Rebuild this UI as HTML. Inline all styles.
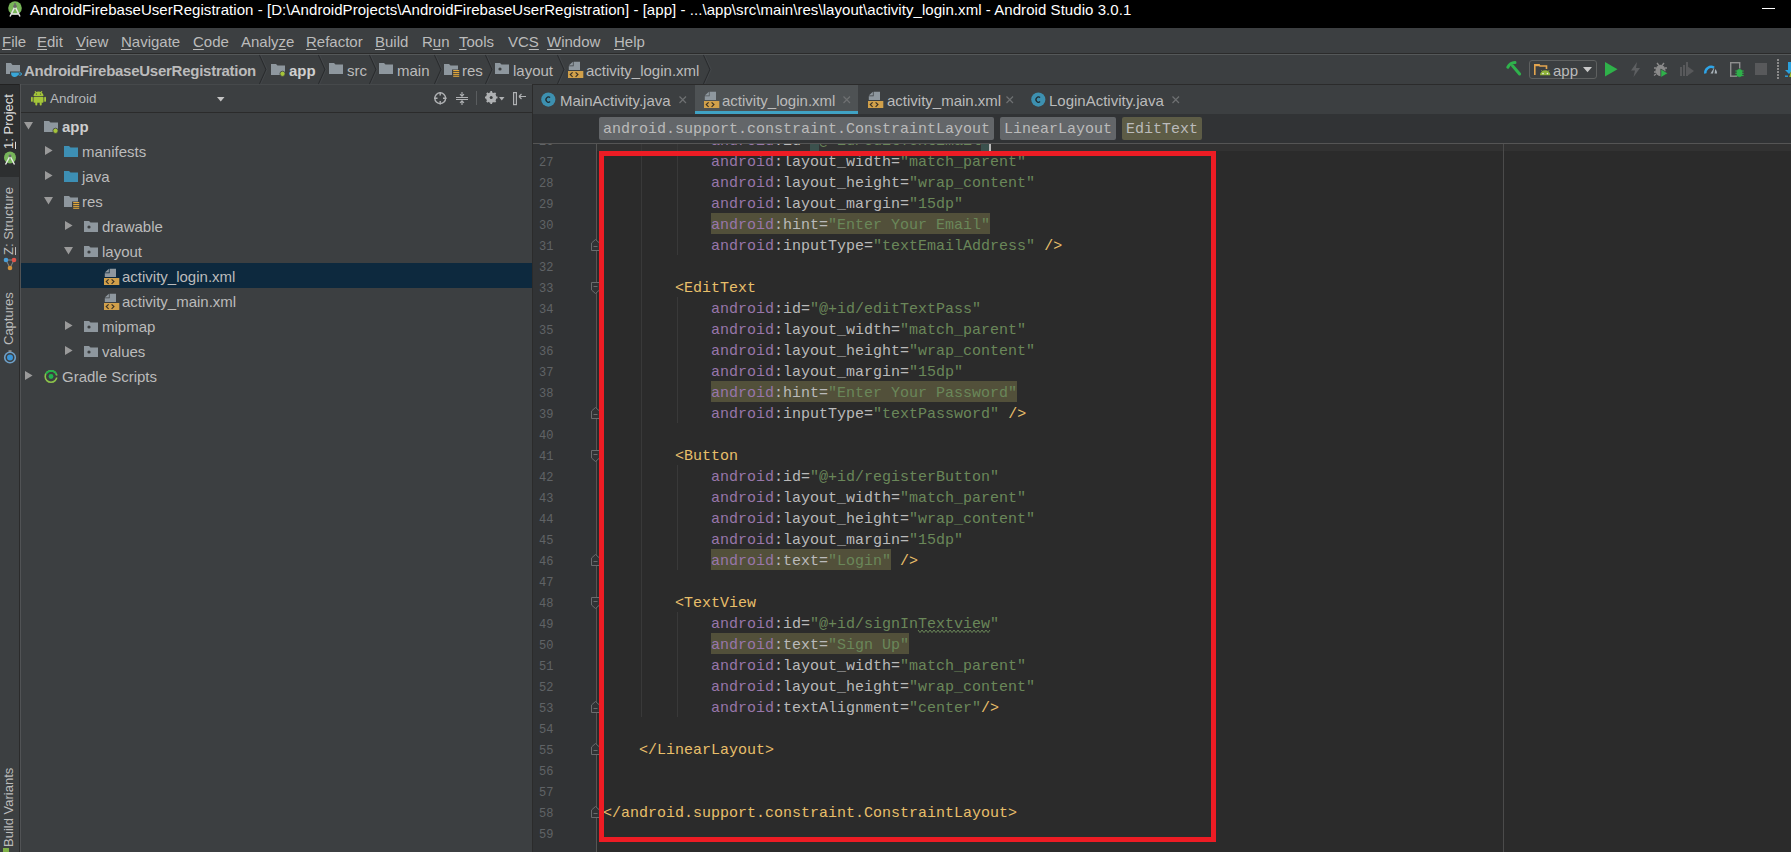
<!DOCTYPE html><html><head><meta charset="utf-8"><style>
*{margin:0;padding:0;box-sizing:border-box}
html,body{width:1791px;height:852px;overflow:hidden;background:#3c3f41;font-family:"Liberation Sans",sans-serif;font-size:15px;color:#bbbbbb;position:relative}
.a{position:absolute}
.t{position:absolute;white-space:pre;line-height:18px}
.vt{position:absolute;transform-origin:0 0;transform:rotate(-90deg);white-space:pre;font-size:13px;line-height:14px;color:#bbbbbb}
.cl{position:absolute;left:603px;height:21px;font-family:"Liberation Mono",monospace;font-size:15px;line-height:21px;white-space:pre;color:#bababa}
.ln{position:absolute;left:539px;height:21px;font-family:"Liberation Mono",monospace;font-size:12px;line-height:21px;white-space:pre;color:#606366}
.tg{color:#e8bf6a}.ns{color:#9876aa}.v{color:#6a8759}
.hl{background:#52503a;display:inline-block;height:21px;vertical-align:top}
u{text-decoration:underline;text-underline-offset:2px;text-decoration-thickness:1px}
svg{position:absolute;overflow:visible}
.pill{position:absolute;top:117px;height:23px;overflow:hidden;border-radius:2px;font-family:"Liberation Mono",monospace;font-size:15px;line-height:26px;padding:0 4px;white-space:pre;color:#bbbbbb}
</style></head><body>
<div class="a" style="left:0px;top:0px;width:1791px;height:28px;background:#000;"></div>
<div class="t" style="left:30px;top:1px;color:#fff;letter-spacing:0.055px">AndroidFirebaseUserRegistration - [D:\AndroidProjects\AndroidFirebaseUserRegistration] - [app] - ...\app\src\main\res\layout\activity_login.xml - Android Studio 3.0.1</div>
<div class="a" style="left:1762px;top:8px;width:13px;height:1px;background:#fff;"></div>
<svg style="left:8px;top:1px" width="15" height="16" viewBox="0 0 15 16"><circle cx="7" cy="7" r="6.8" fill="#78b658"/><path d="M2 15.5 L7 5.5 L12 15.5 M3 13 H11" stroke="#e6e6e6" stroke-width="1.5" fill="none"/><circle cx="7" cy="5.2" r="1.8" fill="#6a6a6a"/><rect x="6.3" y="2" width="1.4" height="2" fill="#6a6a6a"/></svg>
<div class="a" style="left:0px;top:28px;width:1791px;height:25px;background:#3c3f41;"></div>
<div class="t" style="left:2px;top:33px;"><u>F</u>ile</div>
<div class="t" style="left:37px;top:33px;"><u>E</u>dit</div>
<div class="t" style="left:76px;top:33px;"><u>V</u>iew</div>
<div class="t" style="left:121px;top:33px;"><u>N</u>avigate</div>
<div class="t" style="left:193px;top:33px;"><u>C</u>ode</div>
<div class="t" style="left:241px;top:33px;">Analy<u>z</u>e</div>
<div class="t" style="left:306px;top:33px;"><u>R</u>efactor</div>
<div class="t" style="left:375px;top:33px;"><u>B</u>uild</div>
<div class="t" style="left:422px;top:33px;">R<u>u</u>n</div>
<div class="t" style="left:459px;top:33px;"><u>T</u>ools</div>
<div class="t" style="left:508px;top:33px;">VC<u>S</u></div>
<div class="t" style="left:547px;top:33px;"><u>W</u>indow</div>
<div class="t" style="left:614px;top:33px;"><u>H</u>elp</div>
<div class="a" style="left:0px;top:53px;width:1791px;height:1px;background:#2b2b2b;"></div>
<div class="a" style="left:0px;top:54px;width:1791px;height:1px;background:#555859;"></div>
<div class="a" style="left:0px;top:55px;width:1791px;height:29px;background:#3c3f41;"></div>
<div class="a" style="left:21px;top:84px;width:511px;height:1px;background:#46494b;"></div>
<svg style="left:6px;top:63px" width="16" height="15" viewBox="0 0 16 15"><path d="M0 0 H5 L6.5 2 H14 V11 H0 Z" fill="#8e979e"/><path d="M4 8.5 H16 V14 H4 Z" fill="#3c3f41"/><path d="M5 9.5 H12.5 Q12.5 13.5 9 14 H8 Q5 13.5 5 9.5 Z" fill="#3aa7d8"/><ellipse cx="13.8" cy="11" rx="1.8" ry="1.2" fill="none" stroke="#3aa7d8" stroke-width="1"/></svg>
<div class="t" style="left:24px;top:62px;font-weight:bold;letter-spacing:-0.26px">AndroidFirebaseUserRegistration</div>
<svg style="left:259px;top:55px" width="9" height="29" viewBox="0 0 9 29"><path d="M0.5 0 L7 14.5 L0.5 29" fill="none" stroke="#2a2c2e" stroke-width="1.1"/><path d="M1.6 0 L8.1 14.5 L1.6 29" fill="none" stroke="#4a4d50" stroke-width="0.6"/></svg>
<svg style="left:271px;top:64px" width="16" height="14" viewBox="0 0 16 14"><path d="M0 0 H5 L6.5 1.5 H14 V11 H0 Z" fill="#8e979e"/><circle cx="11.5" cy="9.8" r="2.6" fill="#a5c43a" stroke="#3c3f41" stroke-width="0.8"/></svg>
<div class="t" style="left:289px;top:62px;font-weight:bold;color:#cfcfcf">app</div>
<svg style="left:318px;top:55px" width="9" height="29" viewBox="0 0 9 29"><path d="M0.5 0 L7 14.5 L0.5 29" fill="none" stroke="#2a2c2e" stroke-width="1.1"/><path d="M1.6 0 L8.1 14.5 L1.6 29" fill="none" stroke="#4a4d50" stroke-width="0.6"/></svg>
<svg style="left:329px;top:63px" width="16" height="14" viewBox="0 0 16 14"><path d="M0 0 H5 L6.5 1.5 H14 V11 H0 Z" fill="#8e979e"/></svg>
<div class="t" style="left:347px;top:62px;">src</div>
<svg style="left:369px;top:55px" width="9" height="29" viewBox="0 0 9 29"><path d="M0.5 0 L7 14.5 L0.5 29" fill="none" stroke="#2a2c2e" stroke-width="1.1"/><path d="M1.6 0 L8.1 14.5 L1.6 29" fill="none" stroke="#4a4d50" stroke-width="0.6"/></svg>
<svg style="left:379px;top:63px" width="16" height="14" viewBox="0 0 16 14"><path d="M0 0 H5 L6.5 1.5 H14 V11 H0 Z" fill="#8e979e"/></svg>
<div class="t" style="left:397px;top:62px;">main</div>
<svg style="left:434px;top:55px" width="9" height="29" viewBox="0 0 9 29"><path d="M0.5 0 L7 14.5 L0.5 29" fill="none" stroke="#2a2c2e" stroke-width="1.1"/><path d="M1.6 0 L8.1 14.5 L1.6 29" fill="none" stroke="#4a4d50" stroke-width="0.6"/></svg>
<svg style="left:444px;top:64px" width="16" height="14" viewBox="0 0 16 14"><path d="M0 0 H5 L6.5 1.5 H14 V11 H0 Z" fill="#8e979e"/><rect x="8" y="5.5" width="7" height="7" fill="#3c3f41"/><rect x="9.2" y="6.0" width="6" height="1.1" fill="#e2a73a"/><rect x="9.2" y="7.9" width="6" height="1.1" fill="#e2a73a"/><rect x="9.2" y="9.8" width="6" height="1.1" fill="#e2a73a"/><rect x="9.2" y="11.7" width="6" height="1.1" fill="#e2a73a"/></svg>
<div class="t" style="left:462px;top:62px;">res</div>
<svg style="left:485px;top:55px" width="9" height="29" viewBox="0 0 9 29"><path d="M0.5 0 L7 14.5 L0.5 29" fill="none" stroke="#2a2c2e" stroke-width="1.1"/><path d="M1.6 0 L8.1 14.5 L1.6 29" fill="none" stroke="#4a4d50" stroke-width="0.6"/></svg>
<svg style="left:495px;top:63px" width="16" height="14" viewBox="0 0 16 14"><path d="M0 0 H5 L6.5 1.5 H14 V11 H0 Z" fill="#8e979e"/><circle cx="5" cy="6" r="1.6" fill="#3c3f41"/></svg>
<div class="t" style="left:513px;top:62px;">layout</div>
<svg style="left:557px;top:55px" width="9" height="29" viewBox="0 0 9 29"><path d="M0.5 0 L7 14.5 L0.5 29" fill="none" stroke="#2a2c2e" stroke-width="1.1"/><path d="M1.6 0 L8.1 14.5 L1.6 29" fill="none" stroke="#4a4d50" stroke-width="0.6"/></svg>
<svg style="left:568px;top:61px" width="16" height="17" viewBox="0 0 16 17"><path d="M5.6 0.8 H12 V9 H0.8 V5.3 H5.6 Z" fill="#8e979e"/><path d="M0.8 4.6 L4.9 0.8 V4.6 Z" fill="#8e979e"/><rect x="0" y="10" width="15.3" height="7" fill="#d1a04a"/><path d="M4.6 11.3 L2.3 13.6 L4.6 15.9 M7.6 11.3 L9.9 13.6 L7.6 15.9" fill="none" stroke="#3a3226" stroke-width="1.2"/></svg>
<div class="t" style="left:586px;top:62px;">activity_login.xml</div>
<svg style="left:703px;top:55px" width="9" height="29" viewBox="0 0 9 29"><path d="M0.5 0 L7 14.5 L0.5 29" fill="none" stroke="#2a2c2e" stroke-width="1.1"/><path d="M1.6 0 L8.1 14.5 L1.6 29" fill="none" stroke="#4a4d50" stroke-width="0.6"/></svg>
<svg style="left:1506px;top:61px" width="16" height="16" viewBox="0 0 16 16"><path d="M1.8 6.2 Q4 2 9 1.6" fill="none" stroke="#2fb24c" stroke-width="3" stroke-linecap="round"/><path d="M6.5 4.8 L13.6 13" stroke="#2fb24c" stroke-width="3" stroke-linecap="round"/></svg>
<div class="a" style="left:1529px;top:60px;width:68px;height:19px;border:1px solid #5e6060;border-radius:3px;background:#3c3f41"></div>
<svg style="left:1534px;top:64px" width="17" height="12" viewBox="0 0 17 12"><path d="M0.8 11 V0.8 H5 L6 2 H12.5 V5" fill="none" stroke="#e3a54f" stroke-width="1.6"/><rect x="0" y="0" width="5.5" height="2.2" fill="#e3a54f"/><path d="M6 11.2 A5.2 5 0 0 1 16.4 11.2 Z" fill="#8fb43a"/><path d="M7.5 6.3 L8.5 7.6 M15 6.3 L14 7.6" stroke="#8fb43a" stroke-width="1"/><circle cx="9" cy="9.6" r="0.8" fill="#eee"/><circle cx="13.4" cy="9.6" r="0.8" fill="#eee"/></svg>
<div class="t" style="left:1553px;top:62px;color:#bbbbbb">app</div>
<svg style="left:1583px;top:67px" width="10" height="6" viewBox="0 0 10 6"><path d="M0 0 H9 L4.5 5.2 Z" fill="#c8c8c8"/></svg>
<svg style="left:1605px;top:62px" width="13" height="15" viewBox="0 0 13 15"><path d="M0 0 L12.5 7.3 L0 14.6 Z" fill="#2fb14a"/></svg>
<svg style="left:1630px;top:62px" width="11" height="15" viewBox="0 0 11 15"><path d="M7 0 L1 8.5 H5 L3.5 15 L10 6 H6 Z" fill="#5d5f61"/></svg>
<svg style="left:1654px;top:62px" width="15" height="16" viewBox="0 0 15 16"><ellipse cx="6.5" cy="8.5" rx="5" ry="5.8" fill="#8a8a8a"/><path d="M3 1 L5 3.5 M10 1 L8 3.5 M0 6 H2 M11 6 H13 M0 10 H2 M0 13.5 L2 12" stroke="#8a8a8a" stroke-width="1.4"/><path d="M6.8 7 L14 11.3 L6.8 15.6 Z" fill="#2fb14a" stroke="#3c3f41" stroke-width="0.8"/></svg>
<svg style="left:1680px;top:62px" width="15" height="16" viewBox="0 0 15 16"><rect x="0" y="5" width="2" height="9" fill="#58595b"/><rect x="3" y="3" width="2" height="11" fill="#58595b"/><rect x="6" y="0" width="2" height="14" fill="#58595b"/><path d="M7 4 L14 9 L7 14 Z" fill="#58595b"/></svg>
<svg style="left:1704px;top:63px" width="15" height="13" viewBox="0 0 15 13"><path d="M1.3 10.5 A5.9 5.9 0 0 1 10 4.6" fill="none" stroke="#2ea5e8" stroke-width="2.4"/><path d="M11.2 6 A5.9 5.9 0 0 1 13.1 10.5 H10.6 Z" fill="#a9b3ba"/><path d="M6.5 10.5 L10.4 4.3 L9 10.5 Z" fill="#a9b3ba"/></svg>
<svg style="left:1730px;top:62px" width="15" height="16" viewBox="0 0 15 16"><rect x="0.7" y="0.7" width="9" height="13.5" fill="none" stroke="#8e8e8e" stroke-width="1.4"/><ellipse cx="9.5" cy="11" rx="3.2" ry="4.3" fill="#2fb14a" stroke="#3c3f41" stroke-width="0.7"/><path d="M5.3 9 H13.7 M5.3 11.3 H13.7 M5.3 13.6 H13.7" stroke="#2fb14a" stroke-width="1"/></svg>
<div class="a" style="left:1755px;top:63px;width:12px;height:12px;background:#58595b;"></div>
<div class="a" style="left:1777px;top:59px;width:1.5px;height:1.5px;background:#8a8a8a;"></div>
<div class="a" style="left:1777px;top:62px;width:1.5px;height:1.5px;background:#8a8a8a;"></div>
<div class="a" style="left:1777px;top:65px;width:1.5px;height:1.5px;background:#8a8a8a;"></div>
<div class="a" style="left:1777px;top:68px;width:1.5px;height:1.5px;background:#8a8a8a;"></div>
<div class="a" style="left:1777px;top:71px;width:1.5px;height:1.5px;background:#8a8a8a;"></div>
<div class="a" style="left:1777px;top:74px;width:1.5px;height:1.5px;background:#8a8a8a;"></div>
<div class="a" style="left:1777px;top:77px;width:1.5px;height:1.5px;background:#8a8a8a;"></div>
<svg style="left:1785px;top:61px" width="8" height="17" viewBox="0 0 8 17"><path d="M3 1 H8 V9 H8 L4 13 L0 9 H3 Z" fill="#2aa0dc"/><path d="M0 15.2 H3" stroke="#2aa0dc" stroke-width="1.4"/><path d="M4.2 16 L6 10 H8 V16 Z" fill="#98b82a"/></svg>
<div class="a" style="left:0px;top:84px;width:20px;height:768px;background:#3c3f41;"></div>
<div class="a" style="left:0px;top:84px;width:19px;height:93px;background:#2d2f30;"></div>
<div class="a" style="left:0px;top:84px;width:19px;height:1px;background:#222222;"></div>
<div class="a" style="left:19px;top:84px;width:1px;height:768px;background:#2b2b2b;"></div>
<div class="a" style="left:20px;top:84px;width:1px;height:768px;background:#515355;"></div>
<div class="vt" style="left:2px;top:149px;color:#dddddd"><u>1</u>: Project</div>
<svg style="left:3px;top:151px" width="14" height="14" viewBox="0 0 14 14"><circle cx="7" cy="6.5" r="6" fill="#77b55a"/><path d="M2.5 13.5 L7 5 L11.5 13.5" stroke="#e8e8e8" stroke-width="1.4" fill="none"/><circle cx="7" cy="5" r="1.4" fill="#666"/></svg>
<div class="vt" style="left:2px;top:255px;color:#bbbbbb"><u>Z</u>: Structure</div>
<svg style="left:3px;top:257px" width="14" height="14" viewBox="0 0 14 14"><path d="M3 3 L7 11 L11 3 Z" fill="none" stroke="#9a9a9a" stroke-width="0.8"/><circle cx="3" cy="3" r="2.3" fill="#4a9fd8"/><circle cx="11" cy="3" r="2.3" fill="#e0544a"/><circle cx="7" cy="11" r="2.3" fill="#d0923c"/></svg>
<div class="vt" style="left:2px;top:345px;color:#bbbbbb">Captures</div>
<svg style="left:3px;top:350px" width="14" height="14" viewBox="0 0 14 14"><circle cx="7" cy="7.5" r="5.3" fill="none" stroke="#6fa0c8" stroke-width="1.6"/><circle cx="7" cy="7.5" r="3" fill="#3a95d8"/><rect x="5.5" y="0.3" width="3" height="1.5" fill="#9a9a9a"/></svg>
<div class="vt" style="left:2px;top:847px;color:#bbbbbb">Build Variants</div>
<div class="a" style="left:3px;top:848px;width:6px;height:4px;background:#7fb046;"></div>
<div class="a" style="left:21px;top:85px;width:511px;height:767px;background:#3c3f41;"></div>
<div class="a" style="left:21px;top:112px;width:511px;height:1px;background:#2b2b2b;"></div>
<svg style="left:31px;top:90px" width="15" height="16" viewBox="0 0 15 16"><path d="M2.5 6 A5 4.5 0 0 1 12.5 6 Z" fill="#a4c639"/><path d="M4 1 L5.5 3.5 M11 1 L9.5 3.5" stroke="#a4c639" stroke-width="1"/><rect x="2.5" y="6.8" width="10" height="6" rx="1" fill="#a4c639"/><rect x="0" y="6.8" width="1.8" height="5" rx="0.9" fill="#a4c639"/><rect x="13.2" y="6.8" width="1.8" height="5" rx="0.9" fill="#a4c639"/><rect x="4.3" y="12" width="2" height="3.5" rx="0.9" fill="#a4c639"/><rect x="8.7" y="12" width="2" height="3.5" rx="0.9" fill="#a4c639"/><circle cx="5.5" cy="4" r="0.6" fill="#3c3f41"/><circle cx="9.5" cy="4" r="0.6" fill="#3c3f41"/></svg>
<div class="t" style="left:50px;top:90px;font-size:13.5px;color:#b4b8bb">Android</div>
<svg style="left:217px;top:97px" width="8" height="5" viewBox="0 0 8 5"><path d="M0 0 H7.5 L3.75 4.5 Z" fill="#c5c5c5"/></svg>
<svg style="left:434px;top:92px" width="13" height="13" viewBox="0 0 13 13"><circle cx="6.2" cy="6.2" r="5.4" fill="none" stroke="#afb1b3" stroke-width="1.4"/><path d="M6.2 0 V3.5 M6.2 9 V12.5 M0 6.2 H3.5 M9 6.2 H12.5" stroke="#afb1b3" stroke-width="1.4"/></svg>
<svg style="left:456px;top:92px" width="12" height="13" viewBox="0 0 12 13"><path d="M0 5.5 H12 M0 7.5 H12 M6 0 V4 M4 2.2 L6 4.3 L8 2.2 M6 13 V9 M4 10.8 L6 8.7 L8 10.8" stroke="#afb1b3" stroke-width="1.1" fill="none"/></svg>
<div class="a" style="left:476px;top:91px;width:1px;height:14px;background:#5a5d5f;"></div>
<svg style="left:485px;top:91px" width="13" height="13" viewBox="0 0 13 13"><circle cx="6.2" cy="6.5" r="3.8" fill="none" stroke="#afb1b3" stroke-width="2.8"/><path d="M6.2 0 V13 M0 6.5 H12.5 M1.8 2 L10.6 11 M10.6 2 L1.8 11" stroke="#afb1b3" stroke-width="1.8"/><circle cx="6.2" cy="6.5" r="1.5" fill="#3c3f41"/></svg>
<svg style="left:499px;top:97px" width="6" height="4" viewBox="0 0 6 4"><path d="M0 0 H5.5 L2.75 3.5 Z" fill="#afb1b3"/></svg>
<svg style="left:513px;top:92px" width="13" height="13" viewBox="0 0 13 13"><rect x="0.6" y="0.6" width="2.8" height="12" fill="none" stroke="#afb1b3" stroke-width="1.2"/><path d="M6 4.5 H13 M6 4.5 L8.5 2 M6 4.5 L8.5 7" stroke="#afb1b3" stroke-width="1.2" fill="none"/></svg>
<div class="a" style="left:21px;top:263px;width:511px;height:25px;background:#0d293e;"></div>
<svg style="left:24px;top:122px" width="10" height="8" viewBox="0 0 10 8"><path d="M0 0 H9 L4.5 7.6 Z" fill="#9a9a9a"/></svg>
<svg style="left:44px;top:121px" width="16" height="14" viewBox="0 0 16 14"><path d="M0 0 H5 L6.5 1.5 H14 V11 H0 Z" fill="#8e979e"/><circle cx="11.5" cy="9.8" r="2.6" fill="#a5c43a" stroke="#3c3f41" stroke-width="0.8"/></svg>
<div class="t" style="left:62px;top:118px;font-weight:bold;color:#cdcdcd">app</div>
<svg style="left:45px;top:146px" width="8" height="10" viewBox="0 0 8 10"><path d="M0 0 V9 L7.6 4.5 Z" fill="#9a9a9a"/></svg>
<svg style="left:64px;top:146px" width="16" height="14" viewBox="0 0 16 14"><path d="M0 0 H5 L6.5 1.5 H14 V11 H0 Z" fill="#3d8fb4"/></svg>
<div class="t" style="left:82px;top:143px;">manifests</div>
<svg style="left:45px;top:171px" width="8" height="10" viewBox="0 0 8 10"><path d="M0 0 V9 L7.6 4.5 Z" fill="#9a9a9a"/></svg>
<svg style="left:64px;top:171px" width="16" height="14" viewBox="0 0 16 14"><path d="M0 0 H5 L6.5 1.5 H14 V11 H0 Z" fill="#3d8fb4"/></svg>
<div class="t" style="left:82px;top:168px;">java</div>
<svg style="left:44px;top:197px" width="10" height="8" viewBox="0 0 10 8"><path d="M0 0 H9 L4.5 7.6 Z" fill="#9a9a9a"/></svg>
<svg style="left:64px;top:196px" width="16" height="14" viewBox="0 0 16 14"><path d="M0 0 H5 L6.5 1.5 H14 V11 H0 Z" fill="#8e979e"/><rect x="8" y="5.5" width="7" height="7" fill="#3c3f41"/><rect x="9.2" y="6.0" width="6" height="1.1" fill="#e2a73a"/><rect x="9.2" y="7.9" width="6" height="1.1" fill="#e2a73a"/><rect x="9.2" y="9.8" width="6" height="1.1" fill="#e2a73a"/><rect x="9.2" y="11.7" width="6" height="1.1" fill="#e2a73a"/></svg>
<div class="t" style="left:82px;top:193px;">res</div>
<svg style="left:65px;top:221px" width="8" height="10" viewBox="0 0 8 10"><path d="M0 0 V9 L7.6 4.5 Z" fill="#9a9a9a"/></svg>
<svg style="left:84px;top:221px" width="16" height="14" viewBox="0 0 16 14"><path d="M0 0 H5 L6.5 1.5 H14 V11 H0 Z" fill="#8e979e"/><circle cx="5" cy="6" r="1.6" fill="#3c3f41"/></svg>
<div class="t" style="left:102px;top:218px;">drawable</div>
<svg style="left:64px;top:247px" width="10" height="8" viewBox="0 0 10 8"><path d="M0 0 H9 L4.5 7.6 Z" fill="#9a9a9a"/></svg>
<svg style="left:84px;top:246px" width="16" height="14" viewBox="0 0 16 14"><path d="M0 0 H5 L6.5 1.5 H14 V11 H0 Z" fill="#8e979e"/><circle cx="5" cy="6" r="1.6" fill="#3c3f41"/></svg>
<div class="t" style="left:102px;top:243px;">layout</div>
<svg style="left:104px;top:268px" width="16" height="17" viewBox="0 0 16 17"><path d="M5.6 0.8 H12 V9 H0.8 V5.3 H5.6 Z" fill="#8e979e"/><path d="M0.8 4.6 L4.9 0.8 V4.6 Z" fill="#8e979e"/><rect x="0" y="10" width="15.3" height="7" fill="#d1a04a"/><path d="M4.6 11.3 L2.3 13.6 L4.6 15.9 M7.6 11.3 L9.9 13.6 L7.6 15.9" fill="none" stroke="#3a3226" stroke-width="1.2"/></svg>
<div class="t" style="left:122px;top:268px;">activity_login.xml</div>
<svg style="left:104px;top:293px" width="16" height="17" viewBox="0 0 16 17"><path d="M5.6 0.8 H12 V9 H0.8 V5.3 H5.6 Z" fill="#8e979e"/><path d="M0.8 4.6 L4.9 0.8 V4.6 Z" fill="#8e979e"/><rect x="0" y="10" width="15.3" height="7" fill="#d1a04a"/><path d="M4.6 11.3 L2.3 13.6 L4.6 15.9 M7.6 11.3 L9.9 13.6 L7.6 15.9" fill="none" stroke="#3a3226" stroke-width="1.2"/></svg>
<div class="t" style="left:122px;top:293px;">activity_main.xml</div>
<svg style="left:65px;top:321px" width="8" height="10" viewBox="0 0 8 10"><path d="M0 0 V9 L7.6 4.5 Z" fill="#9a9a9a"/></svg>
<svg style="left:84px;top:321px" width="16" height="14" viewBox="0 0 16 14"><path d="M0 0 H5 L6.5 1.5 H14 V11 H0 Z" fill="#8e979e"/><circle cx="5" cy="6" r="1.6" fill="#3c3f41"/></svg>
<div class="t" style="left:102px;top:318px;">mipmap</div>
<svg style="left:65px;top:346px" width="8" height="10" viewBox="0 0 8 10"><path d="M0 0 V9 L7.6 4.5 Z" fill="#9a9a9a"/></svg>
<svg style="left:84px;top:346px" width="16" height="14" viewBox="0 0 16 14"><path d="M0 0 H5 L6.5 1.5 H14 V11 H0 Z" fill="#8e979e"/><circle cx="5" cy="6" r="1.6" fill="#3c3f41"/></svg>
<div class="t" style="left:102px;top:343px;">values</div>
<svg style="left:25px;top:371px" width="8" height="10" viewBox="0 0 8 10"><path d="M0 0 V9 L7.6 4.5 Z" fill="#9a9a9a"/></svg>
<svg style="left:44px;top:369px" width="15" height="15" viewBox="0 0 15 15"><circle cx="7" cy="7.5" r="5.8" fill="none" stroke="#8cc34b" stroke-width="1.6"/><path d="M2 5 A5.8 5.8 0 0 1 12.5 5.5" fill="none" stroke="#22b24c" stroke-width="1.6"/><circle cx="7" cy="7.5" r="2.4" fill="#22b24c"/><rect x="11" y="6.5" width="4" height="2" fill="#3c3f41"/></svg>
<div class="t" style="left:62px;top:368px;">Gradle Scripts</div>
<div class="a" style="left:532px;top:84px;width:1259px;height:1px;background:#2b2b2b;"></div>
<div class="a" style="left:532px;top:84px;width:1px;height:768px;background:#2b2b2b;"></div>
<div class="a" style="left:533px;top:85px;width:1258px;height:29px;background:#3c3f41;"></div>
<div class="a" style="left:695px;top:85px;width:163px;height:26px;background:#4e5254;"></div>
<div class="a" style="left:695px;top:111px;width:163px;height:3px;background:#40a2c4;"></div>
<svg style="left:541px;top:92px" width="15" height="15" viewBox="0 0 15 15"><circle cx="7.3" cy="7.6" r="7.1" fill="#3d90b0"/><path d="M9.1 5.6 A2.5 2.6 0 1 0 9.1 9.6" fill="none" stroke="#1f2b30" stroke-width="1.3"/></svg>
<div class="t" style="left:560px;top:92px;">MainActivity.java</div>
<svg style="left:679px;top:96px" width="8" height="8" viewBox="0 0 8 8"><path d="M0.5 0.5 L7 7 M7 0.5 L0.5 7" stroke="#6e7072" stroke-width="1.2"/></svg>
<svg style="left:704px;top:91px" width="16" height="17" viewBox="0 0 16 17"><path d="M5.6 0.8 H12 V9 H0.8 V5.3 H5.6 Z" fill="#8e979e"/><path d="M0.8 4.6 L4.9 0.8 V4.6 Z" fill="#8e979e"/><rect x="0" y="10" width="15.3" height="7" fill="#d1a04a"/><path d="M4.6 11.3 L2.3 13.6 L4.6 15.9 M7.6 11.3 L9.9 13.6 L7.6 15.9" fill="none" stroke="#3a3226" stroke-width="1.2"/></svg>
<div class="t" style="left:722px;top:92px;">activity_login.xml</div>
<svg style="left:843px;top:96px" width="8" height="8" viewBox="0 0 8 8"><path d="M0.5 0.5 L7 7 M7 0.5 L0.5 7" stroke="#6e7072" stroke-width="1.2"/></svg>
<svg style="left:868px;top:91px" width="16" height="17" viewBox="0 0 16 17"><path d="M5.6 0.8 H12 V9 H0.8 V5.3 H5.6 Z" fill="#8e979e"/><path d="M0.8 4.6 L4.9 0.8 V4.6 Z" fill="#8e979e"/><rect x="0" y="10" width="15.3" height="7" fill="#d1a04a"/><path d="M4.6 11.3 L2.3 13.6 L4.6 15.9 M7.6 11.3 L9.9 13.6 L7.6 15.9" fill="none" stroke="#3a3226" stroke-width="1.2"/></svg>
<div class="t" style="left:887px;top:92px;">activity_main.xml</div>
<svg style="left:1006px;top:96px" width="8" height="8" viewBox="0 0 8 8"><path d="M0.5 0.5 L7 7 M7 0.5 L0.5 7" stroke="#6e7072" stroke-width="1.2"/></svg>
<svg style="left:1031px;top:92px" width="15" height="15" viewBox="0 0 15 15"><circle cx="7.3" cy="7.6" r="7.1" fill="#3d90b0"/><path d="M9.1 5.6 A2.5 2.6 0 1 0 9.1 9.6" fill="none" stroke="#1f2b30" stroke-width="1.3"/></svg>
<div class="t" style="left:1049px;top:92px;">LoginActivity.java</div>
<svg style="left:1172px;top:96px" width="8" height="8" viewBox="0 0 8 8"><path d="M0.5 0.5 L7 7 M7 0.5 L0.5 7" stroke="#6e7072" stroke-width="1.2"/></svg>
<div class="a" style="left:533px;top:114px;width:1258px;height:29px;background:#313335;"></div>
<div class="a" style="left:533px;top:143px;width:1258px;height:1px;background:#555555;"></div>
<div class="a" style="left:533px;top:144px;width:1258px;height:708px;background:#2b2b2b;"></div>
<div class="a" style="left:533px;top:144px;width:63px;height:708px;background:#313335;"></div>
<div class="a" style="left:596px;top:144px;width:1px;height:708px;background:#555555;"></div>
<div class="a" style="left:597px;top:144px;width:1194px;height:7px;background:#323232;"></div>
<div class="a" style="left:641px;top:144px;width:1px;height:100px;background:#393939;"></div>
<div class="a" style="left:677px;top:144px;width:1px;height:100px;background:#393939;"></div>
<div class="a" style="left:641px;top:150px;width:1px;height:567px;background:#393939;"></div>
<div class="a" style="left:677px;top:150px;width:1px;height:105px;background:#393939;"></div>
<div class="a" style="left:677px;top:297px;width:1px;height:126px;background:#393939;"></div>
<div class="a" style="left:677px;top:465px;width:1px;height:105px;background:#393939;"></div>
<div class="a" style="left:677px;top:612px;width:1px;height:105px;background:#393939;"></div>
<div class="ln" style="top:132px">26</div>
<div class="cl" style="top:129px;padding-top:0"><div style="position:relative;top:2px">            <span class="ns">android</span>:id=<span class="v"><span class="b2">"</span>@+id/editTextEmail<span class="b2">"</span></span></div></div>
<div class="ln" style="top:153px">27</div>
<div class="cl" style="top:150px;padding-top:0"><div style="position:relative;top:2px">            <span class="ns">android</span>:layout_width=<span class="v">"match_parent"</span></div></div>
<div class="ln" style="top:174px">28</div>
<div class="cl" style="top:171px;padding-top:0"><div style="position:relative;top:2px">            <span class="ns">android</span>:layout_height=<span class="v">"wrap_content"</span></div></div>
<div class="ln" style="top:195px">29</div>
<div class="cl" style="top:192px;padding-top:0"><div style="position:relative;top:2px">            <span class="ns">android</span>:layout_margin=<span class="v">"15dp"</span></div></div>
<div class="a" style="left:711px;top:213px;width:279px;height:21px;background:#52503a;"></div>
<div class="ln" style="top:216px">30</div>
<div class="cl" style="top:213px;padding-top:0"><div style="position:relative;top:2px">            <span class="ns">android</span>:hint=<span class="v">"Enter Your Email"</span></div></div>
<div class="ln" style="top:237px">31</div>
<div class="cl" style="top:234px;padding-top:0"><div style="position:relative;top:2px">            <span class="ns">android</span>:inputType=<span class="v">"textEmailAddress"</span> <span class="tg">/&gt;</span></div></div>
<div class="ln" style="top:258px">32</div>
<div class="cl" style="top:255px;padding-top:0"><div style="position:relative;top:2px"></div></div>
<div class="ln" style="top:279px">33</div>
<div class="cl" style="top:276px;padding-top:0"><div style="position:relative;top:2px">        <span class="tg">&lt;EditText</span></div></div>
<div class="ln" style="top:300px">34</div>
<div class="cl" style="top:297px;padding-top:0"><div style="position:relative;top:2px">            <span class="ns">android</span>:id=<span class="v">"@+id/editTextPass"</span></div></div>
<div class="ln" style="top:321px">35</div>
<div class="cl" style="top:318px;padding-top:0"><div style="position:relative;top:2px">            <span class="ns">android</span>:layout_width=<span class="v">"match_parent"</span></div></div>
<div class="ln" style="top:342px">36</div>
<div class="cl" style="top:339px;padding-top:0"><div style="position:relative;top:2px">            <span class="ns">android</span>:layout_height=<span class="v">"wrap_content"</span></div></div>
<div class="ln" style="top:363px">37</div>
<div class="cl" style="top:360px;padding-top:0"><div style="position:relative;top:2px">            <span class="ns">android</span>:layout_margin=<span class="v">"15dp"</span></div></div>
<div class="a" style="left:711px;top:381px;width:306px;height:21px;background:#52503a;"></div>
<div class="ln" style="top:384px">38</div>
<div class="cl" style="top:381px;padding-top:0"><div style="position:relative;top:2px">            <span class="ns">android</span>:hint=<span class="v">"Enter Your Password"</span></div></div>
<div class="ln" style="top:405px">39</div>
<div class="cl" style="top:402px;padding-top:0"><div style="position:relative;top:2px">            <span class="ns">android</span>:inputType=<span class="v">"textPassword"</span> <span class="tg">/&gt;</span></div></div>
<div class="ln" style="top:426px">40</div>
<div class="cl" style="top:423px;padding-top:0"><div style="position:relative;top:2px"></div></div>
<div class="ln" style="top:447px">41</div>
<div class="cl" style="top:444px;padding-top:0"><div style="position:relative;top:2px">        <span class="tg">&lt;Button</span></div></div>
<div class="ln" style="top:468px">42</div>
<div class="cl" style="top:465px;padding-top:0"><div style="position:relative;top:2px">            <span class="ns">android</span>:id=<span class="v">"@+id/registerButton"</span></div></div>
<div class="ln" style="top:489px">43</div>
<div class="cl" style="top:486px;padding-top:0"><div style="position:relative;top:2px">            <span class="ns">android</span>:layout_width=<span class="v">"match_parent"</span></div></div>
<div class="ln" style="top:510px">44</div>
<div class="cl" style="top:507px;padding-top:0"><div style="position:relative;top:2px">            <span class="ns">android</span>:layout_height=<span class="v">"wrap_content"</span></div></div>
<div class="ln" style="top:531px">45</div>
<div class="cl" style="top:528px;padding-top:0"><div style="position:relative;top:2px">            <span class="ns">android</span>:layout_margin=<span class="v">"15dp"</span></div></div>
<div class="a" style="left:711px;top:549px;width:180px;height:21px;background:#52503a;"></div>
<div class="ln" style="top:552px">46</div>
<div class="cl" style="top:549px;padding-top:0"><div style="position:relative;top:2px">            <span class="ns">android</span>:text=<span class="v">"Login"</span> <span class="tg">/&gt;</span></div></div>
<div class="ln" style="top:573px">47</div>
<div class="cl" style="top:570px;padding-top:0"><div style="position:relative;top:2px"></div></div>
<div class="ln" style="top:594px">48</div>
<div class="cl" style="top:591px;padding-top:0"><div style="position:relative;top:2px">        <span class="tg">&lt;TextView</span></div></div>
<div class="ln" style="top:615px">49</div>
<div class="cl" style="top:612px;padding-top:0"><div style="position:relative;top:2px">            <span class="ns">android</span>:id=<span class="v">"@+id/signIn<span class="sq">Textview</span>"</span></div></div>
<div class="a" style="left:711px;top:633px;width:198px;height:21px;background:#52503a;"></div>
<div class="ln" style="top:636px">50</div>
<div class="cl" style="top:633px;padding-top:0"><div style="position:relative;top:2px">            <span class="ns">android</span>:text=<span class="v">"Sign Up"</span></div></div>
<div class="ln" style="top:657px">51</div>
<div class="cl" style="top:654px;padding-top:0"><div style="position:relative;top:2px">            <span class="ns">android</span>:layout_width=<span class="v">"match_parent"</span></div></div>
<div class="ln" style="top:678px">52</div>
<div class="cl" style="top:675px;padding-top:0"><div style="position:relative;top:2px">            <span class="ns">android</span>:layout_height=<span class="v">"wrap_content"</span></div></div>
<div class="ln" style="top:699px">53</div>
<div class="cl" style="top:696px;padding-top:0"><div style="position:relative;top:2px">            <span class="ns">android</span>:textAlignment=<span class="v">"center"</span><span class="tg">/&gt;</span></div></div>
<div class="ln" style="top:720px">54</div>
<div class="cl" style="top:717px;padding-top:0"><div style="position:relative;top:2px"></div></div>
<div class="ln" style="top:741px">55</div>
<div class="cl" style="top:738px;padding-top:0"><div style="position:relative;top:2px">    <span class="tg">&lt;/LinearLayout&gt;</span></div></div>
<div class="ln" style="top:762px">56</div>
<div class="cl" style="top:759px;padding-top:0"><div style="position:relative;top:2px"></div></div>
<div class="ln" style="top:783px">57</div>
<div class="cl" style="top:780px;padding-top:0"><div style="position:relative;top:2px"></div></div>
<div class="ln" style="top:804px">58</div>
<div class="cl" style="top:801px;padding-top:0"><div style="position:relative;top:2px"><span class="tg">&lt;/android.support.constraint.ConstraintLayout&gt;</span></div></div>
<div class="ln" style="top:825px">59</div>
<div class="cl" style="top:822px;padding-top:0"><div style="position:relative;top:2px"></div></div>
<div class="a" style="left:810px;top:144px;width:9px;height:7px;background:#3b514d;"></div>
<div class="a" style="left:981px;top:144px;width:9px;height:7px;background:#3b514d;"></div>
<div class="a" style="left:989px;top:144px;width:2px;height:7px;background:#bbbbbb;"></div>
<svg style="left:918px;top:630px" width="74" height="4" viewBox="0 0 74 4"><polyline points="0,0 2,2.6 4,0 6,2.6 8,0 10,2.6 12,0 14,2.6 16,0 18,2.6 20,0 22,2.6 24,0 26,2.6 28,0 30,2.6 32,0 34,2.6 36,0 38,2.6 40,0 42,2.6 44,0 46,2.6 48,0 50,2.6 52,0 54,2.6 56,0 58,2.6 60,0 62,2.6 64,0 66,2.6 68,0 70,2.6 72,0" fill="none" stroke="#6a8759" stroke-width="1"/></svg>
<svg style="left:591px;top:238.5px" width="9" height="12" viewBox="0 0 9 12"><path d="M0.5 11.5 V4 L4.5 0.5 L8.5 4 V11.5 Z" fill="#313335" stroke="#6a6c6e" stroke-width="1"/><path d="M2.5 7.5 H6.5" stroke="#6a6c6e" stroke-width="1"/></svg>
<svg style="left:591px;top:406.5px" width="9" height="12" viewBox="0 0 9 12"><path d="M0.5 11.5 V4 L4.5 0.5 L8.5 4 V11.5 Z" fill="#313335" stroke="#6a6c6e" stroke-width="1"/><path d="M2.5 7.5 H6.5" stroke="#6a6c6e" stroke-width="1"/></svg>
<svg style="left:591px;top:553.5px" width="9" height="12" viewBox="0 0 9 12"><path d="M0.5 11.5 V4 L4.5 0.5 L8.5 4 V11.5 Z" fill="#313335" stroke="#6a6c6e" stroke-width="1"/><path d="M2.5 7.5 H6.5" stroke="#6a6c6e" stroke-width="1"/></svg>
<svg style="left:591px;top:700.5px" width="9" height="12" viewBox="0 0 9 12"><path d="M0.5 11.5 V4 L4.5 0.5 L8.5 4 V11.5 Z" fill="#313335" stroke="#6a6c6e" stroke-width="1"/><path d="M2.5 7.5 H6.5" stroke="#6a6c6e" stroke-width="1"/></svg>
<svg style="left:591px;top:742.5px" width="9" height="12" viewBox="0 0 9 12"><path d="M0.5 11.5 V4 L4.5 0.5 L8.5 4 V11.5 Z" fill="#313335" stroke="#6a6c6e" stroke-width="1"/><path d="M2.5 7.5 H6.5" stroke="#6a6c6e" stroke-width="1"/></svg>
<svg style="left:591px;top:805.5px" width="9" height="12" viewBox="0 0 9 12"><path d="M0.5 11.5 V4 L4.5 0.5 L8.5 4 V11.5 Z" fill="#313335" stroke="#6a6c6e" stroke-width="1"/><path d="M2.5 7.5 H6.5" stroke="#6a6c6e" stroke-width="1"/></svg>
<svg style="left:591px;top:282px" width="9" height="12" viewBox="0 0 9 12"><path d="M0.5 0.5 V8 L4.5 11.5 L8.5 8 V0.5 Z" fill="#313335" stroke="#6a6c6e" stroke-width="1"/><path d="M2.5 4.5 H6.5" stroke="#6a6c6e" stroke-width="1"/></svg>
<svg style="left:591px;top:450px" width="9" height="12" viewBox="0 0 9 12"><path d="M0.5 0.5 V8 L4.5 11.5 L8.5 8 V0.5 Z" fill="#313335" stroke="#6a6c6e" stroke-width="1"/><path d="M2.5 4.5 H6.5" stroke="#6a6c6e" stroke-width="1"/></svg>
<svg style="left:591px;top:597px" width="9" height="12" viewBox="0 0 9 12"><path d="M0.5 0.5 V8 L4.5 11.5 L8.5 8 V0.5 Z" fill="#313335" stroke="#6a6c6e" stroke-width="1"/><path d="M2.5 4.5 H6.5" stroke="#6a6c6e" stroke-width="1"/></svg>
<div class="a" style="left:1503px;top:144px;width:1px;height:708px;background:#4b4b4b;"></div>
<div class="a" style="left:533px;top:114px;width:1258px;height:29px;background:#313335;"></div>
<div class="a" style="left:533px;top:143px;width:1258px;height:1px;background:#555555;"></div>
<div class="pill" style="left:599px;width:395px;background:#636669">android.support.constraint.ConstraintLayout</div>
<div class="pill" style="left:1000px;width:116px;background:#636669">LinearLayout</div>
<div class="pill" style="left:1122px;width:80px;background:#5d5c46">EditText</div>
<div class="a" style="left:599px;top:151px;width:617px;height:691px;border:5px solid #ed1c24"></div>
</body></html>
